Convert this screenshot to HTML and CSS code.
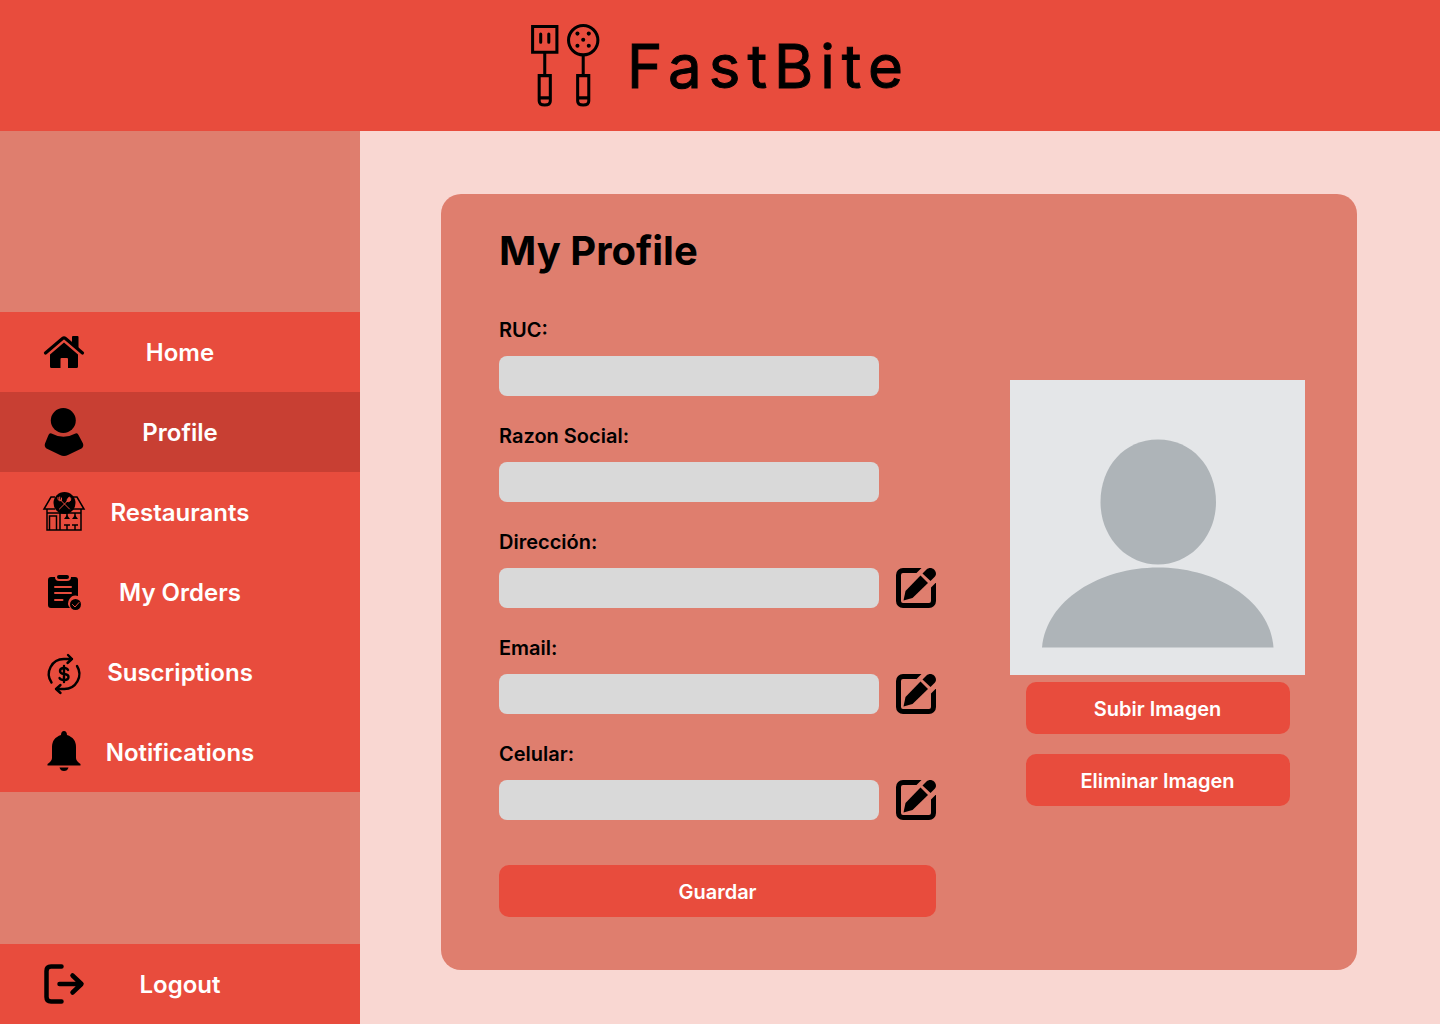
FILE: index.html
```html
<!DOCTYPE html>
<html lang="es">
<head>
  <meta charset="utf-8">
  <meta name="viewport" content="width=device-width, initial-scale=1">
  <title>FastBite - My Profile</title>
  <link rel="stylesheet" href="styles.css">
</head>
<body>
  <svg class="sprite" aria-hidden="true">
    <symbol id="icon-edit" viewBox="0 0 40 40">
      <path d="M29 2.500H7A4.500 4.500 0 0 0 2.500 7V33A4.500 4.500 0 0 0 7 37.500H33A4.500 4.500 0 0 0 37.500 33V11" fill="none" stroke="#000" stroke-width="5"/>
      <path d="M25.500 0H40V14.500L31 23.500 16.500 9Z" class="edit-gap"/>
      <path d="M24.500 7.500 32 15 16.500 30 7.500 32.500 9.500 23Z"/>
      <path d="M26.500 5.500 30.500 1.500C32.500-.5 36-.5 38 1.500 40.500 4 40.500 7 38.500 9L34.500 13Z"/>
    </symbol>
  </svg>

  <header class="header">
    <a class="brand" href="#">
      <svg class="brand-mark" viewBox="0 0 70 82" fill="none" stroke="#000" stroke-width="3" aria-hidden="true">
        <path d="M2.500 2.500H26.500V28H2.500ZM14.500 28V51M9 51H20V76Q20 80 14.500 80T9 76ZM9 73H20"/>
        <path d="M10.500 10V18M18.500 10V18" stroke-linecap="round"/>
        <circle cx="52.500" cy="16" r="14.500"/>
        <path d="M52.500 30V51M47 51H58V76Q58 80 52.500 80T47 76ZM47 73H58"/>
        <g fill="#000" stroke="none"><circle cx="52.500" cy="15.500" r="2"/><circle cx="46.800" cy="9.500" r="2"/><circle cx="58" cy="9.500" r="2"/><circle cx="46.800" cy="21.500" r="2"/><circle cx="58" cy="21.500" r="2"/></g>
      </svg>
      <span class="brand-name">FastBite</span>
    </a>
  </header>

  <div class="layout">
    <aside class="sidebar">
      <nav class="nav" aria-label="Principal">
        <a class="nav-link" href="#">
          <svg class="nav-icon" viewBox="0 0 40 40" aria-hidden="true">
            <path d="M6 22.500 20 10.500 34 22.500V34.500Q34 36 32.500 36H24V27Q24 26 23 26H17.500Q16.500 26 16.500 27V36H7.500Q6 36 6 34.500Z"/>
            <path d="M1.500 21 18.500 6.500Q20 5.300 21.500 6.500L38.500 21" fill="none" stroke="#000" stroke-width="3.200" stroke-linecap="round"/>
            <path d="M28 5Q28 4 29 4H33.500Q34.500 4 34.500 5V18L28 12Z"/>
          </svg>
          <span>Home</span>
        </a>
        <a class="nav-link active" href="#" aria-current="page">
          <svg class="nav-icon tall" viewBox="0 0 40 48" aria-hidden="true">
            <circle cx="19.300" cy="12.500" r="12.500"/>
            <path d="M7.500 25.500Q5.500 24.500 4.500 27L1 35.500Q0 38.500 2.500 40.500L16 47Q20 48.800 24 47L37.500 40.500Q40 38.500 39 35.500L34.500 27Q33.500 24.500 31.500 25.500 19.500 32 7.500 25.500Z"/>
          </svg>
          <span>Profile</span>
        </a>
        <a class="nav-link" href="#">
          <svg class="nav-icon" viewBox="0 0 40 40" aria-hidden="true">
            <g fill="none" stroke="#000" stroke-width="1.500">
              <path d="M11 5H7L0 17H11M29 5H33L40 17H29M3 17V38H37V17M3 21H37M5.500 38V24H12.500V38M16 21V38"/>
              <path d="M23 21V25M31 21V25M20 33H26M28 33H34M23 33V38M31 33V38"/>
            </g>
            <path d="M20 27 23 23 26 27ZM28 27 31 23 34 27Z"/>
            <circle cx="20.500" cy="11" r="11"/>
            <g class="cutlery"><path d="M16 7.500 25.500 17M23.500 9 15.500 17M14 5.500V7.500Q15.500 9.500 17.500 8.500V6M15.700 5V8"/><path d="M23 9.500Q22.500 6.500 25.500 5 27.500 6.500 26.500 8.500 24.500 10.500 23 9.500Z" class="spoon"/></g>
          </svg>
          <span>Restaurants</span>
        </a>
        <a class="nav-link" href="#">
          <svg class="nav-icon" viewBox="0 0 40 40" aria-hidden="true">
            <path d="M7 5H11Q11 9 15 9H23Q27 9 27 5H31Q34 5 34 8V24A7.500 7.500 0 0 0 26 36H7Q4 36 4 33V8Q4 5 7 5Z"/>
            <rect x="13" y="3" width="12" height="4" rx="2"/>
            <path class="paper-line" d="M11 15H27M11 21H27M11 28H18.500"/>
            <circle cx="31.500" cy="32.500" r="5.500"/>
            <path class="check" d="M28.500 32.500 31 35 35 30.500"/>
          </svg>
          <span>My Orders</span>
        </a>
        <a class="nav-link" href="#">
          <svg class="nav-icon" viewBox="0 0 40 40" fill="none" stroke="#000" stroke-width="2.400" stroke-linecap="round" stroke-linejoin="round" aria-hidden="true">
            <path d="M7.500 30.500A15 15 0 0 1 20 7H28M24 3 28 7 23.500 11M33 14A15 15 0 0 1 20 37H12M16.500 33 12 37 16.500 41"/>
            <path d="M24 18Q23 16 20 16 16 16 16 19 16 21.500 20 22 24.500 22.500 24.500 25 24.500 28 20 28 16.500 28 15.500 26M20 14V30"/>
          </svg>
          <span>Suscriptions</span>
        </a>
        <a class="nav-link" href="#">
          <svg class="nav-icon" viewBox="0 0 40 40" aria-hidden="true">
            <path d="M20-1Q22.800-1 23 3C29 5 32 9 32 15V26Q32 29 36.500 32V33.500H3.500V32Q8 29 8 26V15C8 9 11 5 17 3Q17.200-1 20-1ZM15.500 35.500H24.500Q23.500 39 20 39T15.500 35.500Z"/>
          </svg>
          <span>Notifications</span>
        </a>
      </nav>
      <a class="nav-link" href="#">
        <svg class="nav-icon" viewBox="0 0 40 40" fill="none" stroke="#000" stroke-width="4.500" stroke-linecap="round" stroke-linejoin="round" aria-hidden="true">
          <path d="M17.500 2.500H7Q2.500 2.500 2.500 7V33Q2.500 37.500 7 37.500H17.500M15.500 20H37M28.500 11.500 37.500 20 28.500 28.500"/>
        </svg>
        <span>Logout</span>
      </a>
    </aside>

    <main class="main">
      <section class="card">
        <h1 class="title">My Profile</h1>
        <div class="card-body">
          <form class="form">
            <div class="field">
              <label for="ruc">RUC:</label>
              <div class="field-row"><input id="ruc" type="text"></div>
            </div>
            <div class="field">
              <label for="razon">Razon Social:</label>
              <div class="field-row"><input id="razon" type="text"></div>
            </div>
            <div class="field">
              <label for="direccion">Dirección:</label>
              <div class="field-row">
                <input id="direccion" type="text">
                <button class="edit" type="button" aria-label="Editar dirección"><svg class="edit-icon"><use href="#icon-edit"/></svg></button>
              </div>
            </div>
            <div class="field">
              <label for="email">Email:</label>
              <div class="field-row">
                <input id="email" type="email">
                <button class="edit" type="button" aria-label="Editar email"><svg class="edit-icon"><use href="#icon-edit"/></svg></button>
              </div>
            </div>
            <div class="field">
              <label for="celular">Celular:</label>
              <div class="field-row">
                <input id="celular" type="tel">
                <button class="edit" type="button" aria-label="Editar celular"><svg class="edit-icon"><use href="#icon-edit"/></svg></button>
              </div>
            </div>
            <button class="button save" type="submit">Guardar</button>
          </form>

          <div class="photo-panel">
            <svg class="photo" viewBox="0 0 295 295" role="img" aria-label="Imagen de perfil">
              <rect width="295" height="295" fill="#e4e6e8"/>
              <g fill="#aeb4b8">
                <path d="M148 59.500C182 59.500 206 87 206 122S180 184.500 148 184.500 90.500 157 90.500 122 114 59.500 148 59.500Z"/>
                <path d="M32 267.500C36 220 90 187.500 148 187.500S260 220 263.500 267.500Z"/>
              </g>
            </svg>
            <div class="photo-actions">
              <button class="button" type="button">Subir Imagen</button>
              <button class="button" type="button">Eliminar Imagen</button>
            </div>
          </div>
        </div>
      </section>
    </main>
  </div>
</body>
</html>
```
FILE: styles.css
```css
:root {
  --red: #e84c3d;
  --red-dark: #c83f33;
  --coral: #df7e6e;
  --blush: #f9d7d2;
  --grey: #d9d9d9;
}

* {
  box-sizing: border-box;
}

body {
  display: flex;
  flex-direction: column;
  min-height: 100vh;
  margin: 0;
  background: var(--blush);
  color: #000;
  font-family: Inter, "Liberation Sans", sans-serif;
}

.sprite {
  display: none;
}

.header {
  display: flex;
  justify-content: center;
  padding: 24px;
  background: var(--red);
}

.brand {
  display: flex;
  align-items: center;
  gap: 26px;
  color: #000;
  text-decoration: none;
}

.brand-mark {
  width: 71px;
  height: 83px;
}

.brand-name {
  font-size: 60px;
  font-weight: 400;
  line-height: 80px;
  letter-spacing: 7px;
  -webkit-text-stroke: 1px #000;
}

.layout {
  display: grid;
  flex: 1;
  grid-template-columns: 1fr 3fr;
}

.sidebar {
  display: flex;
  flex-direction: column;
  justify-content: space-between;
  padding-top: 181px;
  background: var(--coral);
}

.nav-link {
  display: grid;
  grid-template-columns: 40px 1fr 40px;
  align-items: center;
  height: 80px;
  padding: 0 44px;
  background: var(--red);
  color: #fff;
  font-size: 24px;
  font-weight: 600;
  line-height: 32px;
  text-align: center;
  text-decoration: none;
}

.nav-link span {
  padding-top: 2px;
}

.nav-link.active {
  background: var(--red-dark);
}

.nav-icon {
  width: 40px;
  height: 40px;
  overflow: visible;
}

.nav-icon.tall {
  height: 48px;
}

.cutlery,
.paper-line,
.check {
  fill: none;
  stroke: var(--red);
  stroke-linecap: round;
}

.cutlery {
  stroke-width: 1;
}

.cutlery .spoon {
  fill: var(--red);
}

.paper-line {
  stroke-width: 2;
}

.check {
  stroke-width: 1;
}

.main {
  padding: 63px 83px 54px 81px;
}

.card {
  padding: 33px 52px 53px 58px;
  border-radius: 20px;
  background: var(--coral);
}

.title {
  margin: 0 0 43px;
  font-size: 40px;
  font-weight: 700;
  line-height: 48px;
}

.card-body {
  display: flex;
  justify-content: space-between;
  gap: 40px;
}

.form {
  display: flex;
  flex: 0 1 437px;
  flex-direction: column;
  gap: 28px;
}

.field {
  display: flex;
  flex-direction: column;
  gap: 14px;
}

.field label {
  font-size: 20px;
  font-weight: 600;
  line-height: 24px;
}

.field-row {
  display: grid;
  grid-template-columns: 1fr 40px;
  gap: 17px;
}

.field input {
  width: 100%;
  height: 40px;
  padding: 0 12px;
  border: 0;
  border-radius: 8px;
  background: var(--grey);
  font: inherit;
}

.edit {
  padding: 0;
  border: 0;
  background: none;
  cursor: pointer;
}

.edit-icon {
  display: block;
  width: 40px;
  height: 40px;
}

.edit-gap {
  fill: var(--coral);
}

.button {
  height: 52px;
  padding: 2px 0 0;
  border: 0;
  border-radius: 10px;
  background: var(--red);
  color: #fff;
  font: 600 20px/24px Inter, "Liberation Sans", sans-serif;
  cursor: pointer;
}

.save {
  margin-top: 17px;
}

.photo-panel {
  display: flex;
  flex: 0 0 295px;
  flex-direction: column;
  align-items: center;
  gap: 7px;
  padding-top: 62px;
}

.photo {
  width: 295px;
  height: 295px;
}

.photo-actions {
  display: flex;
  flex-direction: column;
  gap: 20px;
  width: 264px;
}
```
